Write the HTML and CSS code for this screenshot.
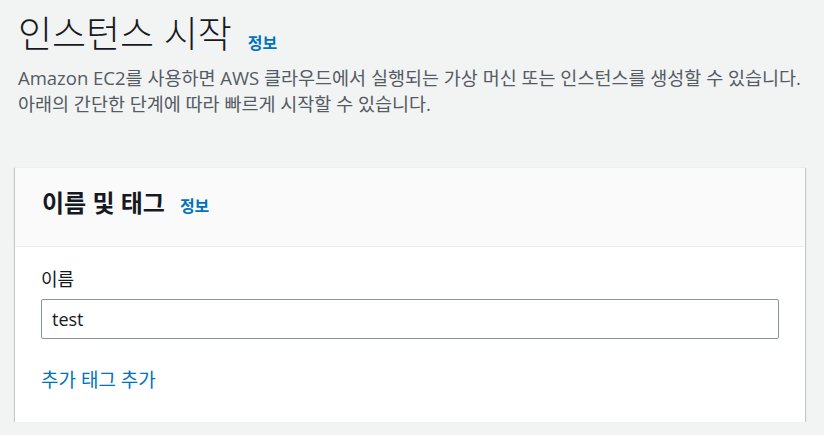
FILE: index.html
```html
<!DOCTYPE html>
<html lang="ko">
<head>
<meta charset="utf-8">
<link rel="stylesheet" href="styles.css">
</head>
<body>
<div class="page">
  <div class="title-row">
    <h1 class="title">인스턴스 시작</h1>
    <a class="info">정보</a>
  </div>
  <p class="desc">Amazon EC2를 사용하면 AWS 클라우드에서 실행되는 가상 머신 또는 인스턴스를 생성할 수 있습니다.<br>아래의 간단한 단계에 따라 빠르게 시작할 수 있습니다.</p>
  <section class="card">
    <div class="card-header">
      <h2 class="card-title">이름 및 태그</h2>
      <a class="info">정보</a>
    </div>
    <div class="card-body">
      <label class="label" for="name">이름</label>
      <input class="input" id="name" type="text" value="test">
      <a class="link">추가 태그 추가</a>
    </div>
  </section>
</div>
</body>
</html>
```

FILE: styles.css
```css
html, body {
  margin: 0;
  padding: 0;
  background: #f2f3f3;
  font-family: "Open Sans", "Noto Sans CJK KR", sans-serif;
  color: #16191f;
}
.page {
  padding: 10px 19px 0 15px;
}
.title-row {
  display: flex;
  align-items: baseline;
  gap: 16px;
  padding-left: 3px;
  height: 48px;
}
.title {
  margin: 0;
  font-size: 37px;
  font-weight: 300;
  line-height: 48px;
  color: #16191f;
}
.info {
  font-size: 16px;
  font-weight: 700;
  color: #0073bb;
}
.title-row .info {
  position: relative;
  top: 1px;
}
.desc {
  margin: 7px 0 0 3px;
  font-size: 18.5px;
  line-height: 26px;
  color: #545b64;
  white-space: nowrap;
}
.card {
  margin-top: 50px;
  background: #fff;
  border-top: 1px solid #eaeded;
  box-shadow: 0 1px 1px 0 rgba(0,28,36,.3), 1px 1px 1px 0 rgba(0,28,36,.15), -1px 1px 1px 0 rgba(0,28,36,.15);
}
.card-header {
  display: flex;
  align-items: baseline;
  gap: 15px;
  background: #fafafa;
  border-bottom: 1px solid #eaeded;
  padding: 19px 27px 27px;
}
.card-title {
  margin: 0;
  font-size: 24px;
  font-weight: 700;
  line-height: 32px;
}
.card-body {
  display: flex;
  flex-direction: column;
  align-items: flex-start;
  padding: 19px 26px 29px;
}
.label {
  font-size: 18px;
  line-height: 26px;
  color: #16191f;
}
.input {
  box-sizing: border-box;
  width: 738px;
  height: 40px;
  margin-top: 7px;
  padding: 0 10px;
  border: 1px solid #879596;
  border-radius: 2px;
  font-family: inherit;
  font-size: 18px;
  color: #16191f;
  outline: none;
}
.link {
  margin-top: 28px;
  font-size: 19px;
  line-height: 26px;
  color: #0073bb;
}
```
